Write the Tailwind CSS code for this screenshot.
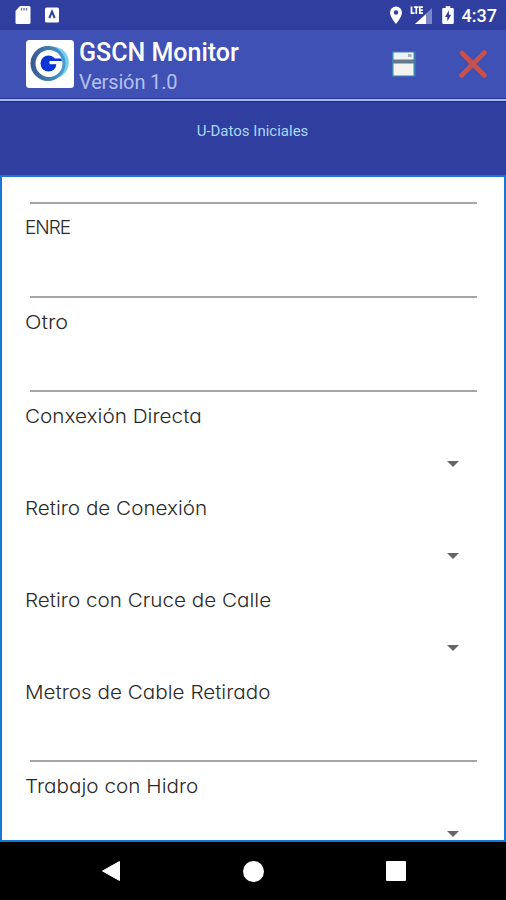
<!DOCTYPE html>
<html lang="es">
<head>
  <meta charset="UTF-8" />
  <meta name="viewport" content="width=device-width, initial-scale=1.0"/>
  <title>GSCN Monitor</title>
  <script src="https://cdn.jsdelivr.net/npm/@tailwindcss/browser@4"></script>
</head>
<body class="bg-black">
  <div class="flex flex-col w-[506px] h-[900px] overflow-hidden font-['Roboto',sans-serif]">

    <!-- Status bar -->
    <div class="flex items-center h-[30px] shrink-0 bg-[#303f9f] pl-[14px] pr-[9px] text-white">
      <svg class="w-[18px] h-5" viewBox="0 0 18 20"><path fill="#fff" d="M6 1h9a1.500 1.500 0 0 1 1.500 1.500v15a1.500 1.500 0 0 1-1.500 1.500H3a1.500 1.500 0 0 1-1.500-1.500V6z"/><path stroke="#6470b8" stroke-width="1.300" d="M7.500 3v2.500M10 3v2.500M12.500 3v2.500"/></svg>
      <svg class="w-4 h-4 ml-3" viewBox="0 0 16 16"><rect x="1" y="0.500" width="14" height="15" rx="1.500" fill="#fff"/><path fill="none" stroke="#303f9f" stroke-width="2" d="M5.300 11 8 4.500 10.700 11"/></svg>
      <svg class="w-[14px] h-5 ml-auto" viewBox="0 0 14 20"><path fill="#fff" fill-rule="evenodd" d="M7 1.500A6 6 0 0 0 1 7.500c0 4.500 6 11.500 6 11.500s6-7 6-11.500a6 6 0 0 0-6-6zm0 3.800a2.200 2.200 0 1 1 0 4.400 2.200 2.200 0 0 1 0-4.400z"/></svg>
      <svg class="w-[23px] h-5 ml-[7px]" viewBox="0 0 23 20"><path fill="#7d88c6" d="M22 3v16H5z"/><path fill="#fff" d="M16 9.200V19H5z"/><path fill="#303f9f" d="M0 0h13.500v10H0z"/><path fill="none" stroke="#fff" stroke-width="1.700" d="M1.500 1.500v6.700h3M4 2.200h4.500M6.300 2v7M13 2.200H9.800v6H13M9.800 5.200h3"/></svg>
      <svg class="w-3 h-5 ml-[9px]" viewBox="0 0 12 20"><path fill="#fff" d="M3.700 1.200h4.600V3H10.500A1.300 1.300 0 0 1 11.800 4.300v13.400a1.300 1.300 0 0 1-1.300 1.300h-9A1.300 1.300 0 0 1 .2 17.700V4.300A1.300 1.300 0 0 1 1.500 3h2.200z"/><path fill="#303f9f" d="M6.900 5.200 3 12h2.300v4.500L9.200 9.700H6.900z"/></svg>
      <span class="ml-2 pt-px text-[18px] leading-[29px] font-medium">4:37</span>
    </div>

    <!-- App bar -->
    <header class="flex items-center h-[68px] shrink-0 bg-[#3f51b5] pl-[26px] pr-[18px]">
      <svg class="w-12 h-12" viewBox="0 0 48 48">
        <defs><linearGradient id="ring"><stop offset="0" stop-color="#3d5590"/><stop offset=".5" stop-color="#3b7daf"/><stop offset="1" stop-color="#4b9fd0"/></linearGradient></defs>
        <rect width="48" height="48" rx="3.500" fill="#fff"/>
        <circle cx="27" cy="22.500" r="15.800" fill="#74cff0"/>
        <circle cx="22" cy="23.500" r="17.500" fill="url(#ring)"/>
        <circle cx="23" cy="23.500" r="13.500" fill="#fff"/>
        <circle cx="22.500" cy="23.500" r="8" fill="#0b35d2"/>
        <path fill="#0b35d2" d="M26 18.500h9.300l.7 2.500H26z"/>
        <path fill="#fff" d="M23.500 21H36v3.200H23.500z"/>
      </svg>
      <div class="ml-[5px] pt-1.5">
        <h1 class="text-[25px] leading-[30px] font-medium text-white whitespace-nowrap">GSCN Monitor</h1>
        <p class="text-[20px] leading-[28px] text-[#b5c0ec] tracking-[-0.150px]">Versión 1.0</p>
      </div>
      <svg class="w-[26px] h-[26px] ml-auto" viewBox="0 0 26 26">
        <rect x="1" y="0.500" width="23.500" height="25" rx="1" fill="#3e82b4"/>
        <rect x="2.500" y="1.500" width="20" height="7" fill="#eef3f5"/>
        <rect x="17" y="3" width="3.500" height="3" fill="#a9b0b4"/>
        <rect x="2.500" y="9" width="20.500" height="3" fill="#64798a"/>
        <rect x="2.500" y="12.500" width="20" height="12" fill="#f3f3f0"/>
      </svg>
      <svg class="w-[30px] h-[30px] ml-[41px]" viewBox="0 0 30 30"><path stroke="#c9504b" stroke-width="4.600" stroke-linecap="round" d="M4 4l22.500 22.500M26.500 3.500l-23 23"/></svg>
    </header>

    <div class="h-[77px] shrink-0 bg-[#303f9f] border-t border-[#2a3799]">
      <div class="h-[2px] bg-[#a8baf0]"></div>
      <div class="h-px bg-[#1c2780]"></div>
      <h2 class="mt-[19px] pr-px text-center text-[15px] leading-5 text-[#a9d7f8]">U-Datos Iniciales</h2>
    </div>

    <!-- Form -->
    <main class="h-[667px] shrink-0 overflow-hidden bg-white border-2 border-[#1976d2] pl-6 pr-[27px] font-['Inter','Noto_Sans',sans-serif] font-light text-[19px] text-[#2a2a2a] [font-feature-settings:'cv11']">
      <div class="h-[37px] pt-[25px] pl-1"><div class="h-[2px] bg-[#a6a6a6]"></div></div>
      <div class="h-[94px]">
        <div class="-ml-px h-7 leading-7"><span class="tracking-[-1px]">ENRE</span></div>
        <div class="pt-[54px] pl-1"><div class="h-[2px] bg-[#a6a6a6]"></div></div>
      </div>
      <div class="h-[94px]">
        <div class="-ml-px h-7 leading-[29px]"><span class="inline-block origin-left scale-x-[1.140]">Otro</span></div>
        <div class="pt-[54px] pl-1"><div class="h-[2px] bg-[#a6a6a6]"></div></div>
      </div>
      <div class="h-[92px]">
        <div class="-ml-px h-7 leading-[29px]"><span class="inline-block origin-left scale-x-[1.090]">Conxexión Directa</span></div>
        <svg class="w-3 h-[6px] mt-[31px] ml-auto mr-[18px]" viewBox="0 0 12 6"><path fill="#666" d="M0 0h12L6 6z"/></svg>
      </div>
      <div class="h-[92px]">
        <div class="-ml-px h-7 leading-[29px]"><span class="inline-block origin-left scale-x-[1.087]">Retiro de Conexión</span></div>
        <svg class="w-3 h-[6px] mt-[31px] ml-auto mr-[18px]" viewBox="0 0 12 6"><path fill="#666" d="M0 0h12L6 6z"/></svg>
      </div>
      <div class="h-[92px]">
        <div class="-ml-px h-7 leading-[29px]"><span class="inline-block origin-left scale-x-[1.088]">Retiro con Cruce de Calle</span></div>
        <svg class="w-3 h-[6px] mt-[31px] ml-auto mr-[18px]" viewBox="0 0 12 6"><path fill="#666" d="M0 0h12L6 6z"/></svg>
      </div>
      <div class="h-[94px]">
        <div class="-ml-px h-7 leading-[29px]"><span class="inline-block origin-left scale-x-[1.088]">Metros de Cable Retirado</span></div>
        <div class="pt-[54px] pl-1"><div class="h-[2px] bg-[#a6a6a6]"></div></div>
      </div>
      <div class="h-[92px]">
        <div class="-ml-px h-7 leading-[29px]"><span class="inline-block origin-left scale-x-[1.090]">Trabajo con Hidro</span></div>
        <svg class="w-3 h-[6px] mt-[31px] ml-auto mr-[18px]" viewBox="0 0 12 6"><path fill="#666" d="M0 0h12L6 6z"/></svg>
      </div>
    </main>

    <!-- Navigation bar -->
    <nav class="flex flex-1 items-center bg-black pl-[101px]">
      <svg class="w-5 h-[22px]" viewBox="0 0 20 22"><path fill="#fff" stroke="#fff" stroke-linejoin="round" d="M1.500 11 18.500 1.500v19z"/></svg>
      <div class="w-[21px] h-[21px] ml-[122px] rounded-full bg-white"></div>
      <div class="w-5 h-5 ml-[122px] rounded-[1px] bg-white"></div>
    </nav>
  </div>
</body>
</html>
